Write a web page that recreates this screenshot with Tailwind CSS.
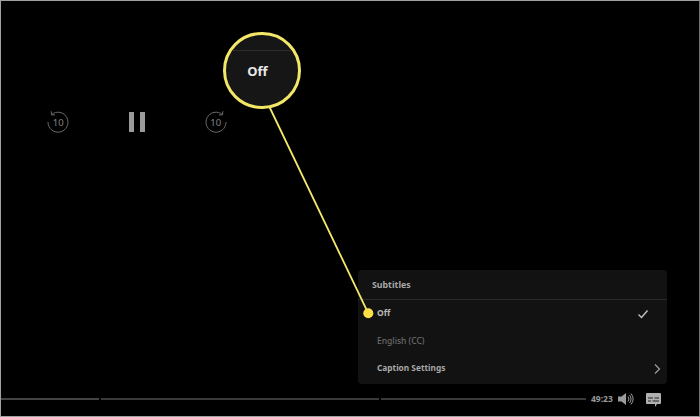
<!DOCTYPE html>
<html lang="en">
<head>
    <meta charset="UTF-8">
    <title>Subtitles menu</title>
    <script src="https://cdn.jsdelivr.net/npm/@tailwindcss/browser@4"></script>
</head>
<body class="bg-black">
    <div class="relative w-[700px] h-[417px] overflow-hidden bg-black border-t border-b border-l border-r border-t-[#a0a0a0] border-b-[#a0a0a0] border-l-[#a0a0a0] border-r-[#707070] font-['Noto_Sans',sans-serif]">

        <!-- player controls -->
        <div class="absolute left-[45px] top-[109px] flex items-center">
            <svg class="w-6 h-6 mr-[59px]" viewBox="0 0 24 24" fill="none" stroke="#6a6a6a" stroke-width="1">
                <path d="M5.5 4.6A10 10 0 1 1 2 12" />
                <path d="M5.2 1.2 5.5 4.8 9 5" />
                <text x="12.3" y="15.5" text-anchor="middle" font-size="9.5" font-weight="400" fill="#858585" stroke="none">10</text>
            </svg>
            <div class="flex gap-[6px] mr-[59px]">
                <div class="w-[5px] h-[20px] bg-[#9a9a9a]"></div>
                <div class="w-[5px] h-[20px] bg-[#9a9a9a]"></div>
            </div>
            <svg class="w-6 h-6" viewBox="0 0 24 24" fill="none" stroke="#6a6a6a" stroke-width="1">
                <path d="M18.5 4.6A10 10 0 1 0 22 12" />
                <path d="M18.8 1.2 18.5 4.8 15 5" />
                <text x="11.7" y="15.5" text-anchor="middle" font-size="9.5" font-weight="400" fill="#858585" stroke="none">10</text>
            </svg>
        </div>

        <!-- subtitles panel -->
        <div class="absolute left-[357px] top-[269px] w-[309px] h-[114px] bg-[#121212] rounded-sm">
            <div class="h-[30px] pl-[14px] pt-[2px] flex items-center border-b border-[#2a2a2a] text-[8.8px] font-bold text-[#a8a8a8]">Subtitles</div>
            <div class="h-[27px] pl-[19px] pr-[18px] flex items-center justify-between text-[8.5px] font-bold text-[#b8b8b8]">
                <span>Off</span>
                <svg class="w-3 h-3" viewBox="0 0 12 12" fill="none" stroke="#c4c4c4" stroke-width="1.4"><path d="M1.5 6.5 4.5 9.5 10.5 2.5" /></svg>
            </div>
            <div class="h-[28px] pl-[19px] flex items-center text-[8.5px] font-medium text-[#6a6a6a]">English (CC)</div>
            <div class="h-[27px] pl-[19px] pr-[4px] flex items-center justify-between text-[8.3px] font-bold text-[#a8a8a8]">
                <span>Caption Settings</span>
                <svg class="w-3 h-3" viewBox="0 0 12 12" fill="none" stroke="#a0a0a0" stroke-width="1.2"><path d="M4 1.5 8.5 6 4 10.5" /></svg>
            </div>
        </div>

        <!-- bottom bar -->
        <div class="absolute left-0 right-0 top-[388px] h-5 flex items-center">
            <div class="w-[98px] h-[2px] bg-[#444444]"></div>
            <div class="w-[278px] h-[2px] ml-[2px] bg-[#3a3a3a]"></div>
            <div class="w-[205px] h-[2px] ml-[2px] bg-[#3a3a3a]"></div>
            <span class="ml-[5px] w-[27px] text-[8.5px] font-bold text-[#9a9a9a]">49:23</span>
            <svg class="w-4 h-[14px]" viewBox="0 0 16 14" fill="none">
                <path d="M0 4.5H3.5L8 1V13L3.5 9.5H0Z" fill="#9a9a9a" />
                <path d="M10 4.5A4 4 0 0 1 10 9.5M11.5 3A6.5 6.5 0 0 1 11.5 11M13 1.5A9 9 0 0 1 13 12.5" stroke="#9a9a9a" stroke-width="1" />
            </svg>
            <svg class="ml-[12px] mt-[2px] w-[15px] h-[14px]" viewBox="0 0 15 14">
                <path d="M1 0H14A1 1 0 0 1 15 1V10A1 1 0 0 1 14 11H11L9 14V11H1A1 1 0 0 1 0 10V1A1 1 0 0 1 1 0Z" fill="#b0b0b0" />
                <path d="M2 5H7M8.5 5H13M2 8H5M6.5 8H13" stroke="#222222" stroke-width="1" />
            </svg>
        </div>

        <!-- callout line and dot -->
        <svg class="absolute left-0 top-0 w-[700px] h-[417px] pointer-events-none" viewBox="0 0 700 417" fill="none">
            <path d="M268 105 367.3 312.3" stroke="#f5e96a" stroke-width="1.8" />
            <circle cx="367.3" cy="312.3" r="5" fill="#fde047" />
        </svg>

        <!-- magnifier -->
        <div class="absolute left-[222px] top-[31px] w-[78px] h-[77px] rounded-full border-[3px] border-[#f2e766] bg-[#161616] overflow-hidden flex items-center justify-center">
            <div class="absolute left-0 right-0 top-[15px] h-px bg-[#2c2c2c]"></div>
            <span class="mr-[9px] mt-[2px] text-[13px] font-bold text-[#e8e8e8]">Off</span>
        </div>
    </div>
</body>
</html>
